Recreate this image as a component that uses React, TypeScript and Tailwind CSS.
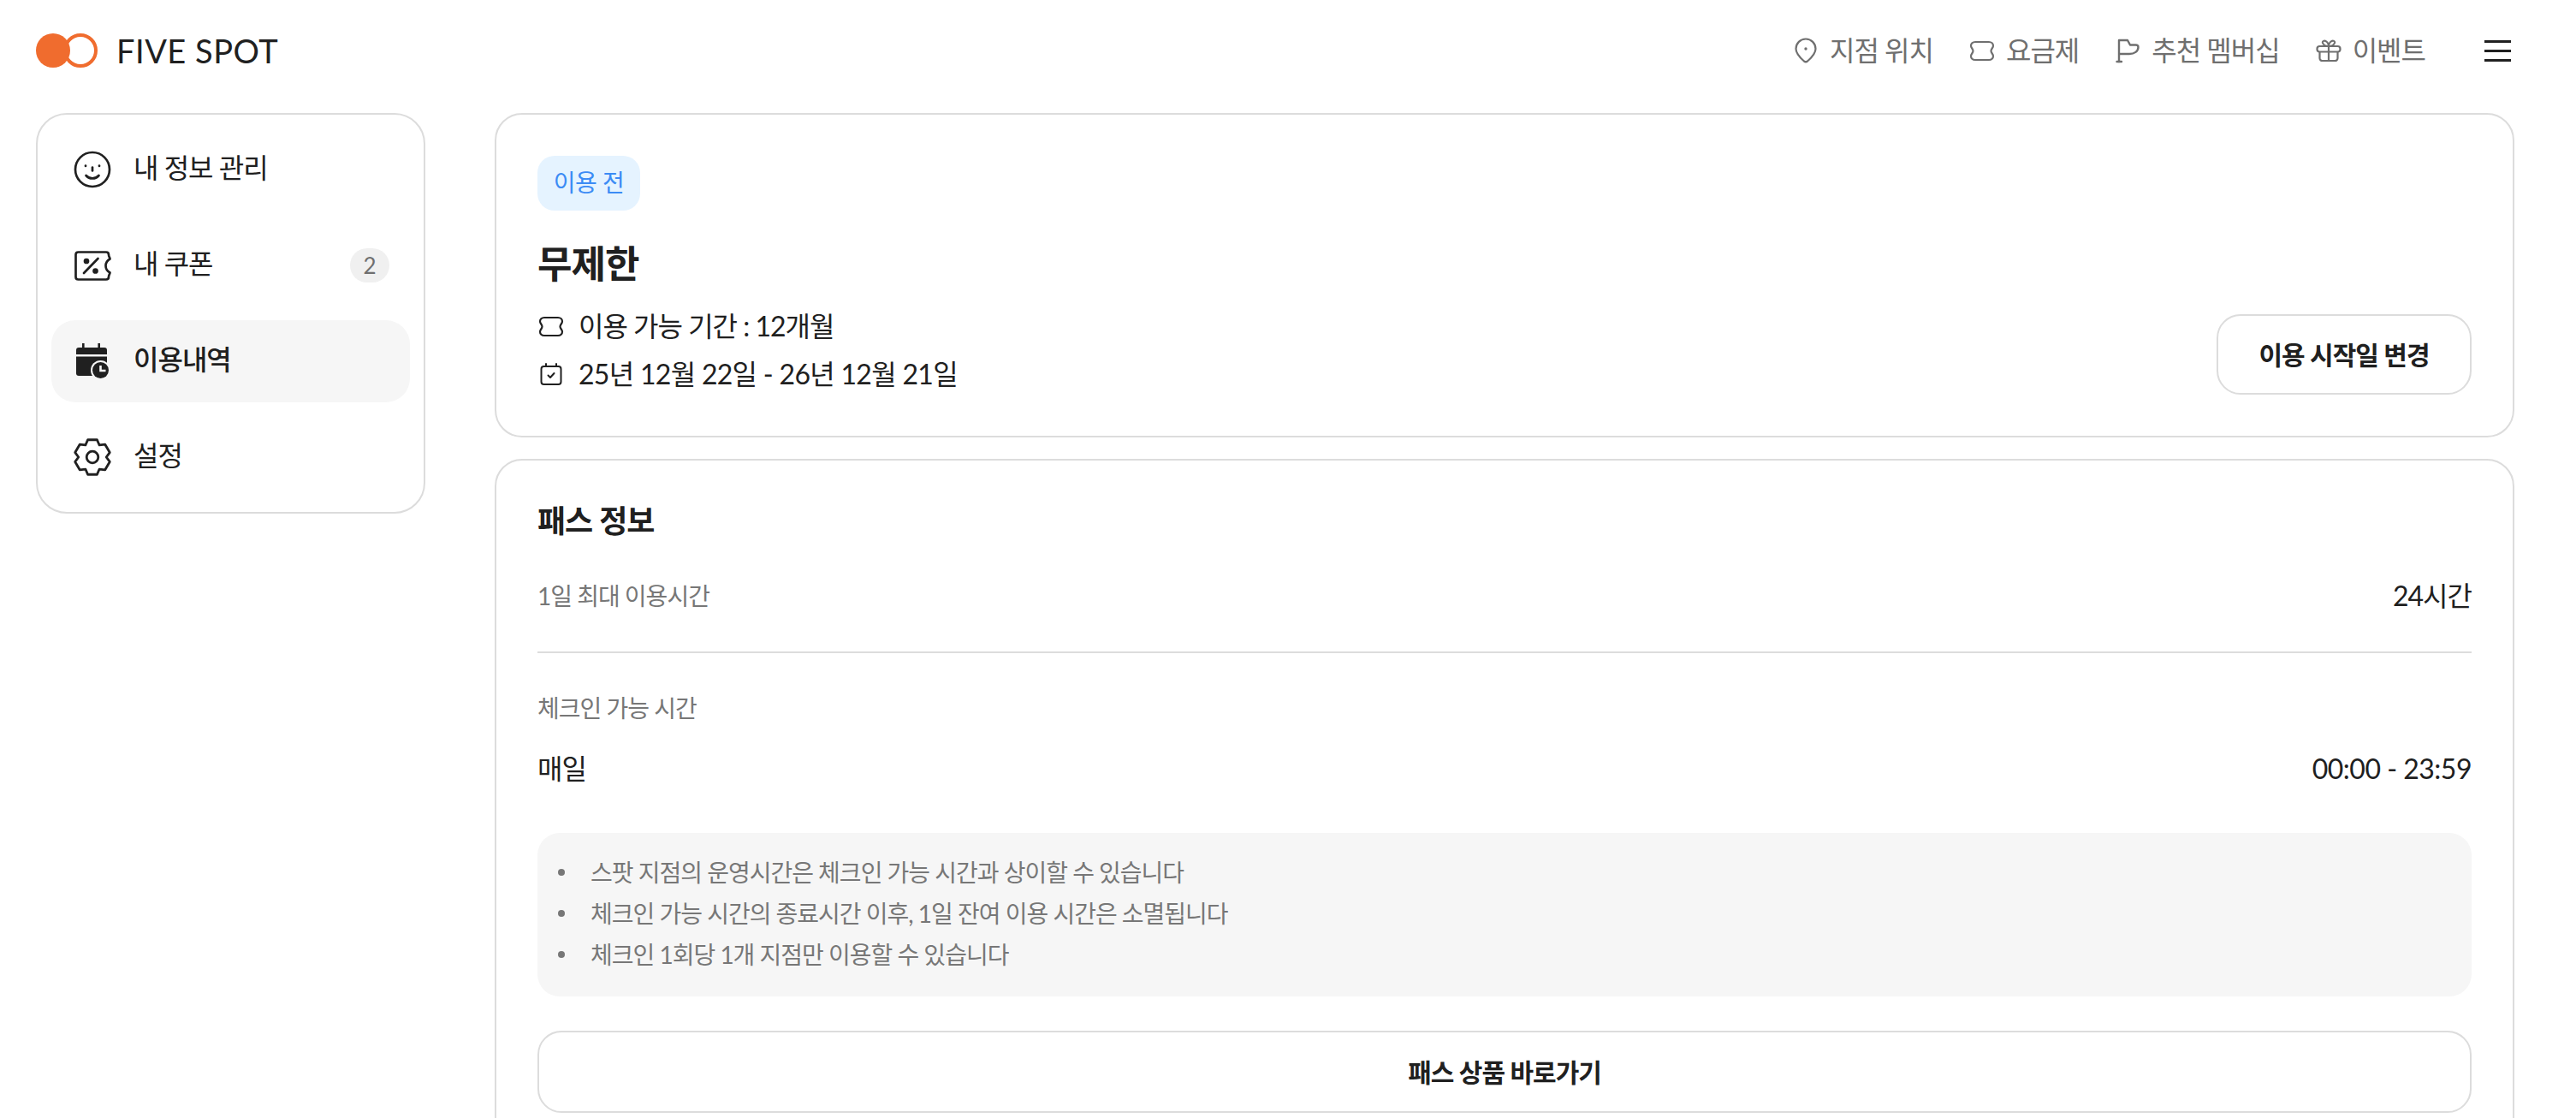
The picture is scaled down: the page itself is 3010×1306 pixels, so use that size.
type IconProps = { className?: string };

// six toothed cog outline, 42x42 box
const gearPath = Array.from({ length: 6 })
  .map((_, i) => {
    const a = -90 + 60 * i;
    return [
      [15.5, a - 30],
      [20, a - 15],
      [20, a + 15],
    ]
      .map(([r, d]) => {
        const t = (d * Math.PI) / 180;
        return `${(21 + r * Math.cos(t)).toFixed(2)} ${(21 + r * Math.sin(t)).toFixed(2)}`;
      })
      .join(' L');
  })
  .join(' L');

function TicketIcon({ className }: IconProps) {
  return (
    <svg viewBox="0 0 30 25" fill="none" stroke="currentColor" strokeWidth="2.2" className={className}>
      <path d="M7 2H23C26 2 28 4 28 6.500C28 9 25.500 10 25.500 12.500C25.500 15 28 16 28 18.500C28 21 26 23 23 23H7C4 23 2 21 2 18.500C2 16 4.500 15 4.500 12.500C4.500 10 2 9 2 6.500C2 4 4 2 7 2Z" />
    </svg>
  );
}

function SmileIcon({ className }: IconProps) {
  return (
    <svg viewBox="0 0 44 44" fill="none" stroke="currentColor" strokeWidth="2.7" strokeLinecap="round" className={className}>
      <circle cx="22" cy="22" r="20" />
      <path d="M14.500 29c2 2.300 4.500 3.400 7.500 3.400s5.500-1.100 7.500-3.400" />
      <path d="M22 19.500v4" />
      <path d="M14 17.500v.5M30 17.500v.5" />
    </svg>
  );
}

function CouponIcon({ className }: IconProps) {
  return (
    <svg viewBox="0 0 43 35" fill="none" stroke="currentColor" strokeWidth="2.7" strokeLinecap="round" strokeLinejoin="round" className={className}>
      <path d="M4.500 1.500H37C39 1.500 40 2.500 40 4.500C40 7 41.500 8 41.500 9.500C38 11.500 36.500 14 36.500 17.500C36.500 21 38 23.500 41.500 25.500C41.500 27 40 28 40 30.500C40 32.500 39 33.500 37 33.500H4.500C2.500 33.500 1.500 32.500 1.500 30.500V4.500C1.500 2.500 2.500 1.500 4.500 1.500Z" />
      <path d="M11 26L27.500 9" />
      <circle cx="14" cy="12" r="2" fill="currentColor" />
      <circle cx="24.500" cy="23.500" r="2" fill="currentColor" />
    </svg>
  );
}

function HistoryIcon({ className }: IconProps) {
  return (
    <svg viewBox="0 0 39 42" className={className}>
      <path fill="currentColor" d="M7 0h2.600v5h15.800V0h2.600v5h5a3 3 0 0 1 3 3v5H0V8a3 3 0 0 1 3-3h4z" />
      <path fill="currentColor" d="M0 15.500h36V38H3a3 3 0 0 1-3-3z" />
      <circle cx="28.500" cy="31.500" r="11.500" fill="#f6f6f6" />
      <circle cx="28.500" cy="31.500" r="9.500" fill="currentColor" />
      <path d="M28.500 26v6h6" fill="none" stroke="#f6f6f6" strokeWidth="2.600" />
    </svg>
  );
}

function GearIcon({ className }: IconProps) {
  return (
    <svg viewBox="0 0 42 42" fill="none" stroke="currentColor" strokeWidth="2.7" strokeLinejoin="round" className={className}>
      <path d={`M${gearPath} Z`} />
      <circle cx="21" cy="21" r="6.500" />
    </svg>
  );
}

function CheckCalendarIcon({ className }: IconProps) {
  return (
    <svg viewBox="0 0 26 26" fill="none" stroke="currentColor" strokeWidth="2" strokeLinecap="round" strokeLinejoin="round" className={className}>
      <rect x="1.500" y="4" width="23" height="21" rx="3" />
      <path d="M7 1v3M19 1v3" />
      <path d="M9.500 14.500l2.500 2.500 4.500-5" />
    </svg>
  );
}

function PinIcon({ className }: IconProps) {
  return (
    <svg viewBox="0 0 26 30" fill="none" stroke="currentColor" strokeWidth="2.2" className={className}>
      <path d="M13 1.500A11.500 11.500 0 0 1 24.500 13C24.500 18 19 24 15 27.500Q13 29 11 27.500C7 24 1.500 18 1.500 13A11.500 11.500 0 0 1 13 1.500Z" />
      <circle cx="13" cy="13" r="1.700" fill="currentColor" stroke="none" />
    </svg>
  );
}

function FlagIcon({ className }: IconProps) {
  return (
    <svg viewBox="0 0 30 30" fill="none" stroke="currentColor" strokeWidth="2.4" strokeLinejoin="round" strokeLinecap="round" className={className}>
      <path d="M5 28V3H15L18 8.500H24.500C27 8.500 27.500 9.500 27.500 11C27.500 16 23 19 17 19H5" />
      <path d="M2.500 28H8" />
    </svg>
  );
}

function GiftIcon({ className }: IconProps) {
  return (
    <svg viewBox="0 0 30 26" fill="none" stroke="currentColor" strokeWidth="2.2" strokeLinejoin="round" className={className}>
      <rect x="1.500" y="8" width="27" height="6.500" rx="3" />
      <path d="M4.500 14.500V22a3 3 0 0 0 3 3h15a3 3 0 0 0 3-3v-7.500" />
      <path d="M15 8V25" />
      <path d="M15 8C12 8 9 7 8 4C7.500 2 10 1 11.500 2C13.500 3 15 6 15 8C15 6 16.500 3 18.500 2C20 1 22.500 2 22 4C21 7 18 8 15 8Z" />
    </svg>
  );
}

function NavItem({ icon, label }: { icon: React.ReactNode; label: string }) {
  return (
    <a className="flex items-center gap-3 text-[32px] leading-[40px] text-[#6f6f6f]">
      <span className="flex w-8 justify-center">{icon}</span>
      <span>{label}</span>
    </a>
  );
}

function SideItem({
  icon,
  label,
  active,
  badge,
}: {
  icon: React.ReactNode;
  label: string;
  active?: boolean;
  badge?: string;
}) {
  return (
    <a
      className={
        active
          ? 'flex h-24 items-center rounded-[28px] bg-[#f6f6f6] px-6 text-[32px] font-medium text-[#202020]'
          : 'flex h-24 items-center rounded-[28px] px-6 text-[32px] text-[#202020]'
      }
    >
      <span className="flex w-12 justify-center">{icon}</span>
      <span className="ml-6 flex-1 pb-1">{label}</span>
      {badge && (
        <span className="flex h-10 w-[46px] items-center justify-center rounded-full bg-[#f0f0f0] text-[26px] tracking-normal text-[#6f6f6f]">
          {badge}
        </span>
      )}
    </a>
  );
}

export default function App() {
  return (
    <div className="h-screen overflow-hidden bg-white font-['Lato','Noto_Sans_CJK_KR',sans-serif] tracking-[-1px] text-[#202020]">
      <header className="flex h-[118px] items-center justify-between pl-[42px] pr-[76px]">
        <div className="flex items-center gap-[22px]">
          <div className="flex">
            <span className="z-10 h-10 w-10 rounded-full bg-[#f06c2e]" />
            <span className="-ml-2 h-10 w-10 rounded-full border-4 border-[#f06c2e]" />
          </div>
          <span className="text-[38px] leading-none tracking-[0.5px] text-[#202020]">FIVE SPOT</span>
        </div>
        <nav className="flex items-center gap-[41px]">
          <NavItem icon={<PinIcon className="h-[30px] w-[26px]" />} label="지점 위치" />
          <NavItem icon={<TicketIcon className="h-[25px] w-[30px]" />} label="요금제" />
          <NavItem icon={<FlagIcon className="h-[30px] w-[30px]" />} label="추천 멤버십" />
          <NavItem icon={<GiftIcon className="h-[26px] w-[30px]" />} label="이벤트" />
          <button className="ml-[28px] flex w-[31px] flex-col gap-2">
            <span className="h-[3px] bg-[#202020]" />
            <span className="h-[3px] bg-[#202020]" />
            <span className="h-[3px] bg-[#202020]" />
          </button>
        </nav>
      </header>

      <div className="mt-[14px] flex items-start gap-[81px] pl-[42px] pr-[72px]">
        <aside className="flex w-[455px] shrink-0 flex-col gap-4 rounded-[36px] border-2 border-[#dcdcdc] p-4">
          <SideItem icon={<SmileIcon className="h-[44px] w-[44px]" />} label="내 정보 관리" />
          <SideItem
            icon={<CouponIcon className="h-[35px] w-[43px]" />}
            label="내 쿠폰"
            badge="2"
          />
          <SideItem icon={<HistoryIcon className="h-[42px] w-[39px]" />} label="이용내역" active />
          <SideItem icon={<GearIcon className="h-[44px] w-[44px]" />} label="설정" />
        </aside>

        <main className="flex flex-1 flex-col gap-[25px]">
          <section className="flex items-end justify-between rounded-[32px] border-2 border-[#dcdcdc] p-12">
            <div>
              <span className="flex h-16 w-[120px] items-center justify-center rounded-[20px] bg-[#e5f3ff] pb-[2px] text-[28px] tracking-[-0.5px] text-[#3b8bf5]">
                이용 전
              </span>
              <h1 className="mt-[36px] text-[44px] leading-[52px] font-bold">무제한</h1>
              <div className="mt-[23px] flex items-center gap-4 text-[32px] leading-[48px]">
                <span className="flex w-8 justify-center">
                  <TicketIcon className="h-[25px] w-[30px]" />
                </span>
                <span>이용 가능 기간 : 12개월</span>
              </div>
              <div className="mt-2 flex items-center gap-4 text-[32px] leading-[48px]">
                <span className="flex w-8 justify-center">
                  <CheckCalendarIcon className="h-[26px] w-[26px]" />
                </span>
                <span className="tracking-[-0.7px]">25년 12월 22일 - 26년 12월 21일</span>
              </div>
            </div>
            <button className="h-[94px] w-[298px] rounded-[28px] border-2 border-[#dcdcdc] text-[30px] font-semibold">
              이용 시작일 변경
            </button>
          </section>

          <section className="rounded-[32px] border-2 border-[#dcdcdc] p-12">
            <h2 className="text-[36px] leading-[44px] font-semibold">패스 정보</h2>
            <div className="mt-[46px] flex items-center justify-between">
              <span className="text-[28px] leading-[40px] text-[#777777]">1일 최대 이용시간</span>
              <span className="text-[32px] leading-[40px]">24시간</span>
            </div>
            <hr className="mt-[45px] border-0 border-t-2 border-[#dcdcdc]" />
            <div className="mt-[44px] text-[28px] leading-[40px] text-[#777777]">체크인 가능 시간</div>
            <div className="mt-[31px] flex items-center justify-between text-[32px] leading-[40px]">
              <span>매일</span>
              <span className="tracking-[-0.5px]">00:00 - 23:59</span>
            </div>
            <ul className="mt-[55px] rounded-[26px] bg-[#f6f6f6] pt-[22px] pb-[25px] pr-6 pl-6 text-[28px] leading-[48px] text-[#777777]">
              <li className="flex items-center">
                <span className="mr-[30px] h-2 w-2 rounded-full bg-[#777777]" />
                스팟 지점의 운영시간은 체크인 가능 시간과 상이할 수 있습니다
              </li>
              <li className="flex items-center">
                <span className="mr-[30px] h-2 w-2 rounded-full bg-[#777777]" />
                체크인 가능 시간의 종료시간 이후, 1일 잔여 이용 시간은 소멸됩니다
              </li>
              <li className="flex items-center">
                <span className="mr-[30px] h-2 w-2 rounded-full bg-[#777777]" />
                체크인 1회당 1개 지점만 이용할 수 있습니다
              </li>
            </ul>
            <button className="mt-10 h-[96px] w-full rounded-[28px] border-2 border-[#dcdcdc] text-[30px] font-semibold">
              패스 상품 바로가기
            </button>
          </section>
        </main>
      </div>
    </div>
  );
}
